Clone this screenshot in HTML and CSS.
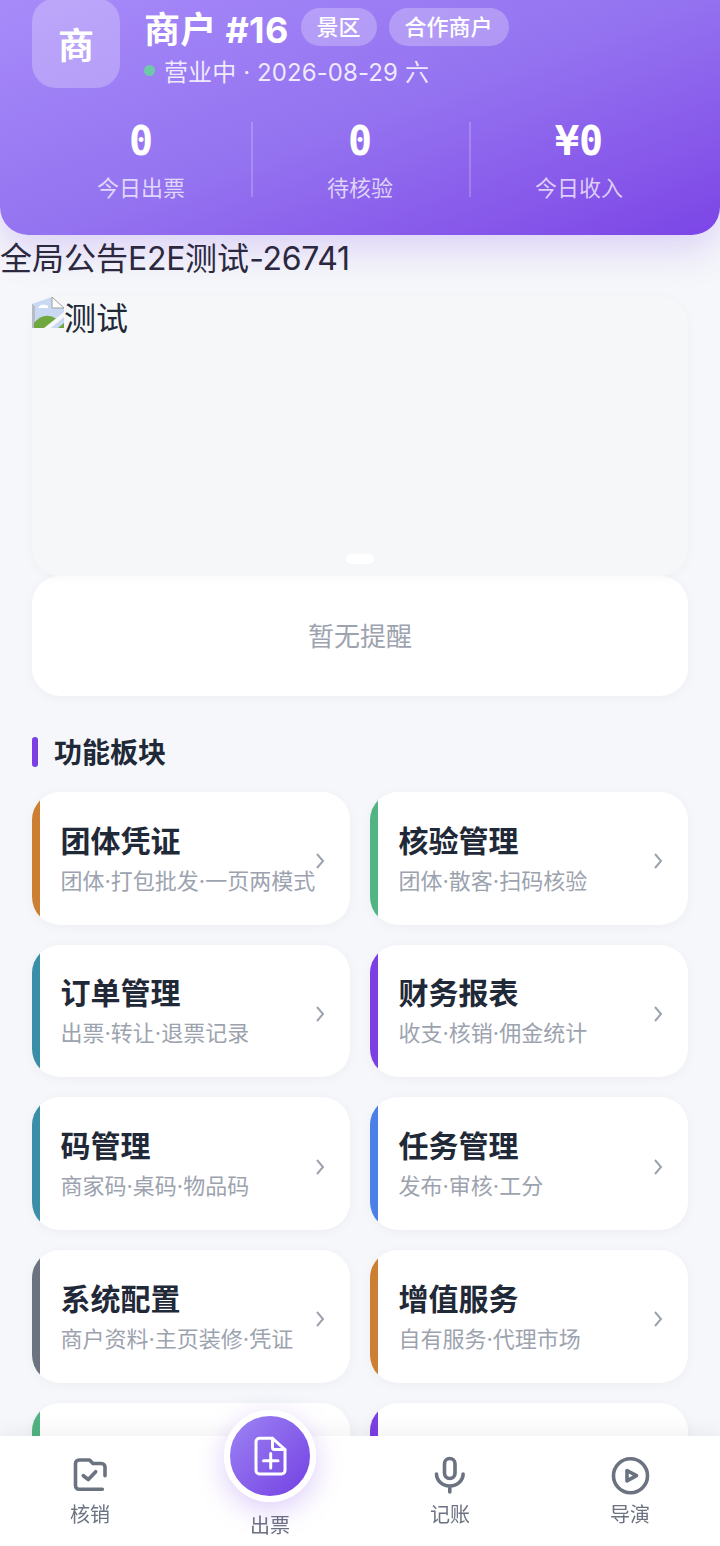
FILE: index.html
```html
<!DOCTYPE html>
<html lang="zh-CN">
<head>
<meta charset="utf-8">
<title>商户工作台</title>
<link rel="stylesheet" href="styles.css">
</head>
<body>
<div class="page">
  <header class="hero">
    <div class="merchant">
      <div class="avatar">商</div>
      <div class="info">
        <div class="title-row">
          <span class="name">商户 #16</span>
          <span class="tag">景区</span>
          <span class="tag">合作商户</span>
        </div>
        <div class="status"><i class="dot"></i>营业中 · 2026-08-29 六</div>
      </div>
    </div>
    <div class="stats">
      <div class="stat"><b>0</b><span>今日出票</span></div>
      <div class="stat"><b>0</b><span>待核验</span></div>
      <div class="stat"><b>¥0</b><span>今日收入</span></div>
    </div>
  </header>
  <div class="notice">全局公告<span class="latin">E2E</span>测试<span class="latin">-26741</span></div>
  <section class="banner">
    <div class="alt">
      <svg class="broken" viewBox="0 0 32 32" width="32" height="32">
        <path d="M0 8 L20 1 L32 12 V32 H0Z" fill="#c9d8f3"/>
        <path d="M0 8 V32 H3 V10Z" fill="#b8bcc4"/>
        <path d="M20 1 L32 12 H20Z" fill="#fff" stroke="#a0a0a0"/>
        <path d="M6 12 q3-5 7-3 q4 0 3 3Z" fill="#fff"/>
        <path d="M2 32 V27 Q12 15 25 23 L16 32Z" fill="#6fa83f"/>
        <path d="M26 32 L32 27 V32Z" fill="#6fa83f"/>
        <path d="M12 32 L32 16 V21 L19 32Z" fill="#f6f7f9"/>
      </svg>测试
    </div>
    <i class="pager"></i>
  </section>
  <section class="reminder">暂无提醒</section>
  <h2 class="section-title">功能板块</h2>
  <div class="grid">
    <a class="card c-orange"><div class="text"><strong>团体凭证</strong><small>团体·打包批发·一页两模式</small></div><svg class="chev" viewBox="0 0 10 18"><path d="M2 2l6 7-6 7"/></svg></a>
    <a class="card c-green"><div class="text"><strong>核验管理</strong><small>团体·散客·扫码核验</small></div><svg class="chev" viewBox="0 0 10 18"><path d="M2 2l6 7-6 7"/></svg></a>
    <a class="card c-teal"><div class="text"><strong>订单管理</strong><small>出票·转让·退票记录</small></div><svg class="chev" viewBox="0 0 10 18"><path d="M2 2l6 7-6 7"/></svg></a>
    <a class="card c-purple"><div class="text"><strong>财务报表</strong><small>收支·核销·佣金统计</small></div><svg class="chev" viewBox="0 0 10 18"><path d="M2 2l6 7-6 7"/></svg></a>
    <a class="card c-teal"><div class="text"><strong>码管理</strong><small>商家码·桌码·物品码</small></div><svg class="chev" viewBox="0 0 10 18"><path d="M2 2l6 7-6 7"/></svg></a>
    <a class="card c-blue"><div class="text"><strong>任务管理</strong><small>发布·审核·工分</small></div><svg class="chev" viewBox="0 0 10 18"><path d="M2 2l6 7-6 7"/></svg></a>
    <a class="card c-gray"><div class="text"><strong>系统配置</strong><small>商户资料·主页装修·凭证</small></div><svg class="chev" viewBox="0 0 10 18"><path d="M2 2l6 7-6 7"/></svg></a>
    <a class="card c-orange"><div class="text"><strong>增值服务</strong><small>自有服务·代理市场</small></div><svg class="chev" viewBox="0 0 10 18"><path d="M2 2l6 7-6 7"/></svg></a>
    <a class="card c-green"></a>
    <a class="card c-purple"></a>
  </div>
</div>
<nav class="tabbar">
  <a class="tab">
    <svg class="tab-icon" viewBox="0 0 40 40"><path d="M32.3 34.3H9a3.5 3.5 0 0 1-3.5-3.5V8.5A3.5 3.5 0 0 1 9 5h10.5l3.500 3.500h8.500a3.500 3.500 0 0 1 3.500 3.500v8.700"/><path d="M13.300 20.700l5 3.800 7.400-7.800"/></svg>
    <span>核销</span>
  </a>
  <a class="tab tab-main">
    <span class="fab">
      <svg viewBox="0 0 40 40"><path d="M9.500 2.300h13L35 13.500v21a3.500 3.500 0 0 1-3.500 3.500h-22A3.500 3.500 0 0 1 6 34.500V5.800a3.500 3.500 0 0 1 3.500-3.500z"/><path d="M22.500 2.300V11.500a2 2 0 0 0 2 2H35"/><path d="M20.700 17.500v14.500M13.500 24.700h14.500"/></svg>
    </span>
    <span>出票</span>
  </a>
  <a class="tab">
    <svg class="tab-icon" viewBox="0 0 40 40"><rect x="14.500" y="3.500" width="10.500" height="20" rx="5.250"/><path d="M6.500 19a13.300 12 0 0 0 26.600 0M19.800 31v6"/></svg>
    <span>记账</span>
  </a>
  <a class="tab">
    <svg class="tab-icon" viewBox="0 0 40 40"><circle cx="20.500" cy="20.800" r="17"/><path d="M17 15.500l9.500 5.200-9.500 5.200z"/></svg>
    <span>导演</span>
  </a>
</nav>
</body>
</html>
```
FILE: styles.css
```css
* { box-sizing: border-box; }
html, body { margin: 0; padding: 0; }
body {
  background: #f5f7fa;
  font-family: "Inter", "Noto Sans CJK SC", sans-serif;
  color: #1f2937;
  overflow: hidden;
  height: 1546px;
}
.page { margin-top: -2px; }
.hero {
  height: 237px;
  padding: 0 32px;
  border-radius: 0 0 28px 28px;
  background: linear-gradient(160deg, #a78bfa 0%, #9473f0 50%, #8758ea 80%, #7b45e6 100%);
  box-shadow: 0 12px 40px rgba(124, 58, 237, .22);
  color: #fff;
}
.merchant { display: flex; gap: 24px; }
.avatar {
  width: 88px;
  height: 90px;
  border-radius: 24px;
  background: rgba(255, 255, 255, .25);
  display: flex;
  align-items: center;
  justify-content: center;
  font-size: 36px;
  font-weight: 700;
}
.info { padding-top: 8px; }
.title-row { display: flex; align-items: center; gap: 12px; height: 42px; }
.name { font-size: 36px; font-weight: 700; letter-spacing: .3px; white-space: nowrap; }
.tag {
  height: 38px;
  line-height: 38px;
  padding: 0 16px;
  border-radius: 19px;
  background: rgba(255, 255, 255, .25);
  font-size: 22px;
  font-weight: 500;
}
.status {
  display: flex;
  align-items: center;
  margin-top: 6px;
  height: 32px;
  font-size: 24px;
  letter-spacing: .1px;
  color: rgba(255, 255, 255, .85);
  white-space: nowrap;
}
.dot {
  width: 11px;
  height: 11px;
  margin-right: 9px;
  border-radius: 50%;
  background: #6ec9a8;
}
.stats {
  display: grid;
  grid-template-columns: 221px 218px 217px;
  margin-top: 34px;
}
.stat {
  height: 75px;
  display: flex;
  flex-direction: column;
  align-items: center;
  padding-right: 1px;
  border-right: 2px solid rgba(255, 255, 255, .2);
}
.stat:nth-child(2) { padding-right: 2px; }
.stat:last-child { border-right: 0; }
.stat b {
  font-family: "DejaVu Sans Mono", monospace;
  font-size: 40px;
  line-height: 38px;
  font-weight: 700;
}
.stat span {
  margin-top: 13px;
  font-size: 22px;
  line-height: 30px;
  color: rgba(255, 255, 255, .72);
}
.notice {
  height: 61px;
  padding-top: 2px;
  font-size: 32px;
  line-height: 44px;
  color: #2b2840;
  white-space: nowrap;
}
.latin { letter-spacing: -.3px; }
.banner {
  position: relative;
  margin: 0 32px;
  height: 280px;
  border-radius: 28px;
  background: #f6f7f9;
  box-shadow: 0 2px 12px rgba(0, 0, 0, .03);
}
.alt {
  font-size: 32px;
  line-height: 46px;
  color: #1f2937;
  display: flex;
  align-items: flex-start;
}
.broken { flex: none; }
.pager {
  position: absolute;
  left: 314px;
  top: 258px;
  width: 28px;
  height: 10px;
  border-radius: 5px;
  background: #fff;
}
.reminder {
  margin: 0 32px;
  height: 120px;
  padding-bottom: 3px;
  border-radius: 28px;
  background: #fff;
  box-shadow: 0 2px 12px rgba(0, 0, 0, .04);
  display: flex;
  align-items: center;
  justify-content: center;
  font-size: 26px;
  color: #9ca3af;
}
.section-title {
  position: relative;
  margin: 36px 32px 0;
  padding-left: 22px;
  height: 40px;
  font-size: 28px;
  line-height: 42px;
  font-weight: 700;
  color: #1f2937;
}
.section-title::before {
  content: "";
  position: absolute;
  left: 0;
  top: 5px;
  width: 6px;
  height: 30px;
  border-radius: 3px;
  background: #7c3fe4;
}
.grid {
  display: grid;
  grid-template-columns: 318px 318px;
  column-gap: 20px;
  row-gap: 20px;
  margin: 20px 32px 0;
  grid-auto-rows: 132.67px;
}
.card {
  display: flex;
  align-items: center;
  padding-right: 25px;
  border-radius: 28px;
  overflow: hidden;
  background: #fff;
  box-shadow: 0 2px 12px rgba(0, 0, 0, .04);
}
.card::before {
  content: "";
  flex: none;
  align-self: stretch;
  width: 8px;
  background: var(--stripe);
}
.text { flex: 1; min-width: 0; margin-left: 20.5px; }
.text strong {
  display: block;
  font-size: 30px;
  line-height: 40px;
  font-weight: 700;
  color: #1f2937;
}
.text small {
  display: block;
  margin-top: 5px;
  font-size: 22px;
  line-height: 30px;
  color: #9ca3af;
  white-space: nowrap;
}
.chev {
  flex: none;
  width: 10px;
  height: 18px;
  margin-top: 6px;
  fill: none;
  stroke: #9ca3af;
  stroke-width: 2;
}
.c-orange { --stripe: #cc7f32; }
.c-green { --stripe: #52b383; }
.c-teal { --stripe: #3b8ea8; }
.c-purple { --stripe: #7c3fe4; }
.c-blue { --stripe: #4a80e8; }
.c-gray { --stripe: #6b7280; }
.tabbar {
  position: fixed;
  left: 0;
  right: 0;
  bottom: 0;
  height: 110px;
  display: grid;
  grid-template-columns: repeat(4, 180px);
  background: #fff;
  box-shadow: 0 -4px 20px rgba(0, 0, 0, .06);
}
.tab {
  display: flex;
  flex-direction: column;
  align-items: center;
  padding-top: 19px;
  font-size: 20px;
  line-height: 28px;
  color: #6b7280;
}
.tab-icon {
  width: 40px;
  height: 40px;
  fill: none;
  stroke: #6b7280;
  stroke-width: 3.6;
  stroke-linecap: round;
  stroke-linejoin: round;
  margin-bottom: 6px;
}
.tab-main { position: relative; padding-top: 76px; }
.fab {
  position: absolute;
  left: 44px;
  top: -26px;
  width: 92px;
  height: 92px;
  border-radius: 50%;
  border: 6px solid #fff;
  background: linear-gradient(135deg, #9d84f4, #7340e2);
  box-shadow: 0 8px 28px rgba(124, 58, 237, .25);
  display: flex;
  align-items: center;
  justify-content: center;
}
.fab svg {
  width: 40px;
  height: 40px;
  fill: none;
  stroke: #fff;
  stroke-width: 3;
  stroke-linejoin: round;
  stroke-linecap: round;
}
```
